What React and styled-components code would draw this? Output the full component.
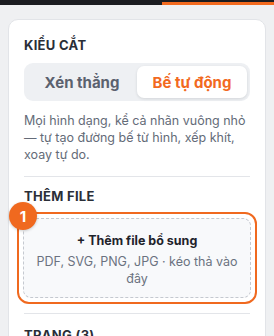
import React from 'react';
import styled, { createGlobalStyle } from 'styled-components';

const GlobalStyle = createGlobalStyle`
  html, body {
    margin: 0;
    padding: 0;
    background: #eff0f2;
    font-family: Inter, "Noto Sans", "Liberation Sans", sans-serif;
    -webkit-font-smoothing: antialiased;
  }
  * { box-sizing: border-box; }
`;

// Dark strip across the top with orange accent on the right
const TopBar = styled.div`
  display: flex;
  align-items: flex-end;
  height: 5px;
  background: #1b1c20;
`;

const TopSpacer = styled.div`
  flex: 0 0 162px;
`;

const TopAccent = styled.div`
  flex: 1;
  height: 3px;
  background: #f26a1f;
`;

const Page = styled.div`
  padding: 14px 8px 0;
`;

const Card = styled.div`
  background: #fff;
  border: 1px solid #e2e4e8;
  border-radius: 10px;
  padding: 17px 15px 20px;
`;

const SectionTitle = styled.div`
  font-size: 13px;
  font-weight: 700;
  letter-spacing: 0.3px;
  color: #2a2e37;
  line-height: 16px;
`;

const Segmented = styled.div`
  margin-top: 10px;
  display: grid;
  grid-template-columns: 1fr 1fr;
  height: 38px;
  padding: 3px;
  background: #eef0f3;
  border-radius: 9px;
`;

const Segment = styled.div`
  display: flex;
  align-items: center;
  justify-content: center;
  border-radius: 7px;
  font-size: 15px;
  font-weight: 700;
  color: ${({ $active }) => ($active ? '#f26a1f' : '#5b616e')};
  background: ${({ $active }) => ($active ? '#fff' : 'transparent')};
  box-shadow: ${({ $active }) => ($active ? '0 1px 3px rgba(20, 24, 36, 0.12)' : 'none')};
`;

const Description = styled.p`
  margin: 11px 0 0;
  font-size: 12.5px;
  line-height: 17px;
  color: #646b78;
`;

const Divider = styled.div`
  height: 1px;
  background: #e3e5e9;
  margin: ${({ $m }) => $m || '13px 0 11px'};
`;

const DropWrap = styled.div`
  position: relative;
  margin: 8px -7px 0;
  padding: 4px;
  border: 2.5px solid #f0691f;
  border-radius: 12px;
`;

const Badge = styled.div`
  position: absolute;
  left: -10px;
  top: -12px;
  width: 28px;
  height: 28px;
  border-radius: 50%;
  background: #f0691f;
  color: #fff;
  font-size: 15px;
  font-weight: 700;
  display: flex;
  align-items: center;
  justify-content: center;
  box-shadow: 0 1px 3px rgba(0, 0, 0, 0.2);
`;

const DropZone = styled.div`
  border: 1px dashed #c5c9d0;
  border-radius: 8px;
  background: #f8f9fb;
  padding: 14px 12px 10px;
  text-align: center;
`;

const DropTitle = styled.div`
  font-size: 12.5px;
  font-weight: 700;
  color: #1f232b;
  line-height: 16px;
`;

const DropHint = styled.div`
  margin-top: 4px;
  font-size: 12.5px;
  line-height: 17px;
  color: #6b7280;
`;

export default function App() {
  return (
    <>
      <GlobalStyle />
      <TopBar>
        <TopSpacer />
        <TopAccent />
      </TopBar>
      <Page>
        <Card>
          <SectionTitle>KIỂU CẮT</SectionTitle>
          <Segmented>
            <Segment>Xén thẳng</Segment>
            <Segment $active>Bế tự động</Segment>
          </Segmented>
          <Description>
            Mọi hình dạng, kể cả nhãn vuông nhỏ — tự tạo đường bế từ hình, xếp khít, xoay tự do.
          </Description>
          <Divider />
          <SectionTitle>THÊM FILE</SectionTitle>
          <DropWrap>
            <Badge>1</Badge>
            <DropZone>
              <DropTitle>+ Thêm file bổ sung</DropTitle>
              <DropHint>PDF, SVG, PNG, JPG · kéo thả vào đây</DropHint>
            </DropZone>
          </DropWrap>
          <Divider $m="9px 0 13px" />
          <SectionTitle>TRANG (3)</SectionTitle>
        </Card>
      </Page>
    </>
  );
}
